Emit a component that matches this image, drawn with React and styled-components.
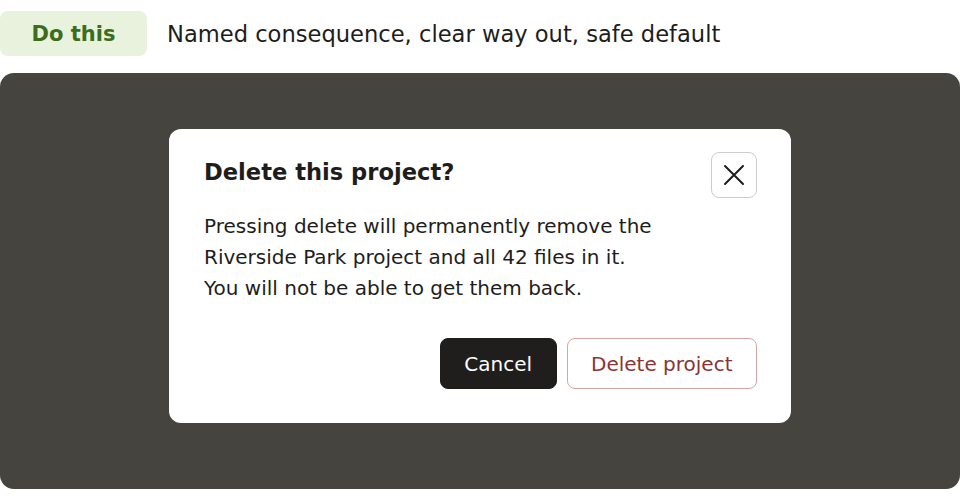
import styled, { createGlobalStyle } from "styled-components"

const GlobalStyle = createGlobalStyle`
  html, body {
    margin: 0;
    padding: 0;
    background: #ffffff;
    font-family: "DejaVu Sans", "Liberation Sans", sans-serif;
    color: #1e1d1b;
  }
`

const Page = styled.div`
  width: 960px;
  padding-top: 11px;
`

const Verdict = styled.div`
  display: flex;
  align-items: center;
  gap: 20px;
  height: 45px;
`

const Badge = styled.span`
  display: flex;
  align-items: center;
  justify-content: center;
  width: 147px;
  height: 45px;
  border-radius: 8px;
  background: #e8f2dd;
  color: #3b6d1c;
  font-weight: 700;
  font-size: 21px;
`

const Caption = styled.span`
  font-size: 22.6px;
  color: #1e1d1b;
`

const Backdrop = styled.div`
  margin-top: 17px;
  height: 416px;
  border-radius: 14px;
  background: #46443f;
  padding-top: 56px;
  box-sizing: border-box;
`

const Dialog = styled.div`
  width: 622px;
  margin: 0 auto;
  box-sizing: border-box;
  background: #ffffff;
  border-radius: 12px;
  padding: 23px 34px 34px 35px;
`

const Header = styled.div`
  display: flex;
  align-items: center;
  justify-content: space-between;
`

const Title = styled.h2`
  margin: 0 0 7px;
  font-size: 22.6px;
  font-weight: 700;
  color: #1e1d1b;
`

const CloseButton = styled.button`
  display: flex;
  align-items: center;
  justify-content: center;
  width: 46px;
  height: 46px;
  padding: 0;
  border: 1px solid #cfcccc;
  border-radius: 8px;
  background: #ffffff;
  color: #1e1d1b;
`

const Body = styled.p`
  margin: 13px 0 0;
  font-size: 20px;
  line-height: 31px;
  color: #1e1d1b;
`

const Actions = styled.div`
  display: flex;
  justify-content: flex-end;
  gap: 10px;
  margin-top: 34px;
`

const Button = styled.button`
  height: 51px;
  padding: 0 23.5px;
  border-radius: 8px;
  font-family: inherit;
  font-size: 20px;
  border: 1px solid ${(p) => (p.$danger ? "#d9a4a4" : "#1f1e1c")};
  background: ${(p) => (p.$danger ? "#ffffff" : "#1f1e1c")};
  color: ${(p) => (p.$danger ? "#8b3434" : "#ffffff")};
`

function CloseIcon() {
  return (
    <svg width="24" height="24" viewBox="0 0 24 24" fill="none" stroke="currentColor" strokeWidth="2" strokeLinecap="round">
      <path d="M3 3L21 21M21 3L3 21" />
    </svg>
  )
}

export default function App() {
  return (
    <Page>
      <GlobalStyle />
      <Verdict>
        <Badge>Do this</Badge>
        <Caption>Named consequence, clear way out, safe default</Caption>
      </Verdict>
      <Backdrop>
        <Dialog>
          <Header>
            <Title>Delete this project?</Title>
            <CloseButton aria-label="Close">
              <CloseIcon />
            </CloseButton>
          </Header>
          <Body>
            Pressing delete will permanently remove the
            <br />
            Riverside Park project and all 42 files in it.
            <br />
            You will not be able to get them back.
          </Body>
          <Actions>
            <Button>Cancel</Button>
            <Button $danger>Delete project</Button>
          </Actions>
        </Dialog>
      </Backdrop>
    </Page>
  )
}
